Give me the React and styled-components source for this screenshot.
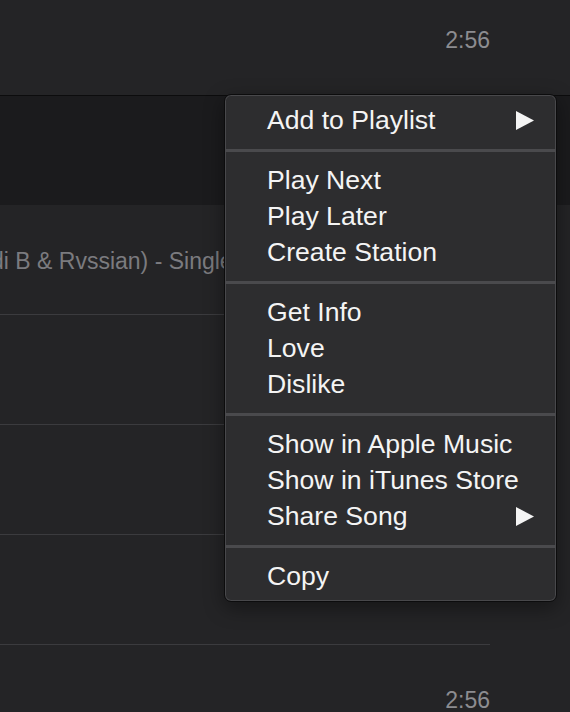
import React from "react";
import styled, { createGlobalStyle } from "styled-components";

const Global = createGlobalStyle`
  html, body { margin: 0; padding: 0; background: #242426; }
  body { font-family: "Liberation Sans", Arial, sans-serif; }
  * { box-sizing: border-box; }
`;

const Page = styled.div`
  position: relative;
  width: 570px;
  height: 712px;
  overflow: hidden;
  background: #242426;
`;

const List = styled.div`
  display: flex;
  flex-direction: column;
  margin-top: -15px;
`;

const Row = styled.div`
  height: 110px;
  flex: none;
  background: ${(p) => (p.$selected ? "#1b1b1d" : "transparent")};
  border-top: ${(p) => (p.$selected ? "1px solid #0c0c0d" : "none")};
`;

const RowInner = styled.div`
  width: 490px;
  height: 100%;
  display: flex;
  align-items: center;
  justify-content: space-between;
  border-bottom: ${(p) => (p.$line ? "1px solid #3b3b3e" : "none")};
`;

const AlbumCell = styled.div`
  width: 224px;
  overflow: hidden;
  display: flex;
  padding-top: 4px;
`;

const Album = styled.span`
  margin-left: -46px;
  white-space: nowrap;
  font-size: 23px;
  color: #7b7b7f;
`;

const Time = styled.span`
  margin-left: auto;
  font-size: 23px;
  color: #8c8c90;
  margin-top: 1px;
`;

const Menu = styled.div`
  position: absolute;
  left: 224px;
  top: 94px;
  width: 333px;
  padding: 7px 0;
  background: #2d2d2f;
  border: 1px solid #0c0c0d;
  border-radius: 7px;
  box-shadow: inset 0 0 0 1px #48484b, 0 6px 20px rgba(0, 0, 0, 0.4);
  display: flex;
  flex-direction: column;
`;

const Item = styled.div`
  height: 36px;
  display: flex;
  align-items: center;
  justify-content: space-between;
  padding: 0 22px 0 42px;
  font-size: 26.6px;
  color: #f4f4f4;
  white-space: nowrap;
`;

const Separator = styled.div`
  height: 24px;
  padding-top: 11px;
  &::after {
    content: "";
    display: block;
    height: 3px;
    background: #4a4a4d;
  }
`;

const Arrow = () => (
  <svg width="18" height="19" viewBox="0 0 18 19">
    <polygon points="0,0 18,9.5 0,19" fill="#f4f4f4" />
  </svg>
);

const groups = [
  [{ label: "Add to Playlist", sub: true }],
  [{ label: "Play Next" }, { label: "Play Later" }, { label: "Create Station" }],
  [{ label: "Get Info" }, { label: "Love" }, { label: "Dislike" }],
  [
    { label: "Show in Apple Music" },
    { label: "Show in iTunes Store" },
    { label: "Share Song", sub: true },
  ],
  [{ label: "Copy" }],
];

export default function App() {
  return (
    <Page>
      <Global />
      <List>
        <Row>
          <RowInner>
            <Time>2:56</Time>
          </RowInner>
        </Row>
        <Row $selected>
          <RowInner />
        </Row>
        <Row>
          <RowInner $line>
            <AlbumCell>
              <Album>Cardi B &amp; Rvssian) - Single</Album>
            </AlbumCell>
          </RowInner>
        </Row>
        <Row>
          <RowInner $line />
        </Row>
        <Row>
          <RowInner $line />
        </Row>
        <Row>
          <RowInner $line />
        </Row>
        <Row>
          <RowInner>
            <Time>2:56</Time>
          </RowInner>
        </Row>
      </List>
      <Menu>
        {groups.map((g, gi) => (
          <React.Fragment key={gi}>
            {gi > 0 && <Separator />}
            {g.map((it) => (
              <Item key={it.label}>
                <span>{it.label}</span>
                {it.sub && <Arrow />}
              </Item>
            ))}
          </React.Fragment>
        ))}
      </Menu>
    </Page>
  );
}
